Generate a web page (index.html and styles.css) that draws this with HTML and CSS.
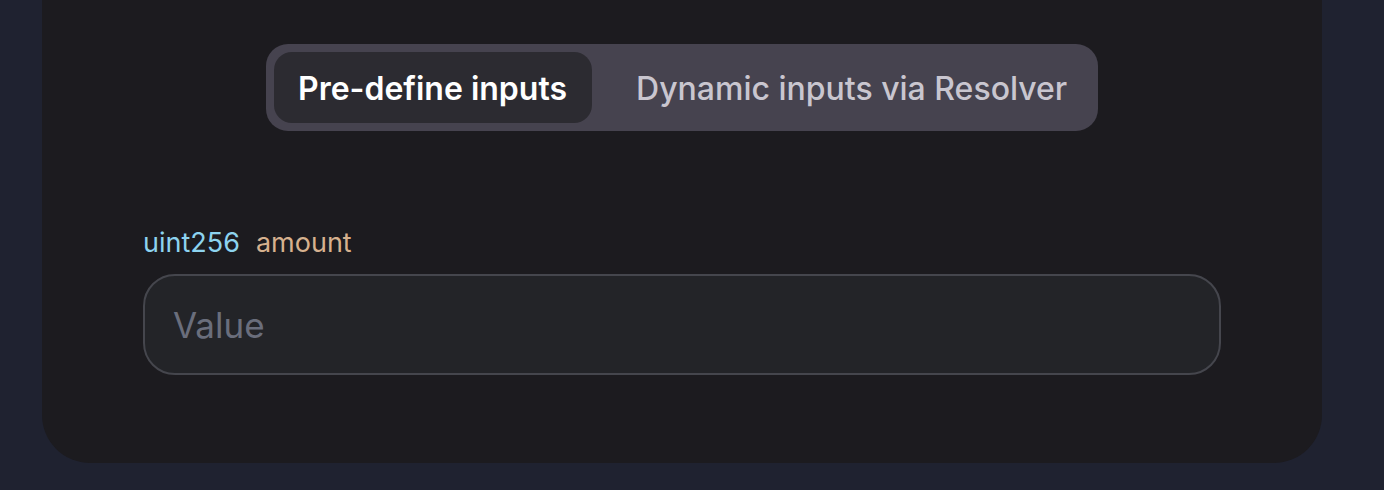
FILE: index.html
```html
<!DOCTYPE html>
<html>
<head>
<meta charset="utf-8">
<link rel="stylesheet" href="styles.css">
</head>
<body>
<div class="page">
  <div class="card">
    <div class="tabs-row">
      <div class="tabs">
        <div class="tab active">Pre-define inputs</div>
        <div class="tab">Dynamic inputs via Resolver</div>
      </div>
    </div>
    <div class="field">
      <div class="label"><span class="type">uint256</span><span class="name">amount</span></div>
      <div class="input"><span class="placeholder">Value</span></div>
    </div>
  </div>
</div>
</body>
</html>
```
FILE: styles.css
```css
html, body {
  margin: 0;
  padding: 0;
  background: #1f2230;
  font-family: Inter, "Noto Sans", sans-serif;
}
.page {
  width: 1384px;
  height: 490px;
  padding: 0 0 0 42px;
  box-sizing: border-box;
}
.card {
  width: 1280px;
  background: #1c1b1f;
  height: 463px;
  border-radius: 0 0 48px 48px;
  padding-top: 44px;
  box-sizing: border-box;
}
.tabs-row {
  display: flex;
  justify-content: center;
}
.tabs {
  display: flex;
  background: #46434f;
  border-radius: 22px;
  padding: 8px;
  width: 832px;
  box-sizing: border-box;
}
.tab {
  height: 71px;
  display: flex;
  align-items: center;
  padding: 2px 25px 0 44px;
  box-sizing: border-box;
  font-size: 32px;
  font-weight: 500;
  color: #c9c6cf;
  border-radius: 18px;
  white-space: nowrap;
}
.tab.active {
  background: #2c2b31;
  color: #ffffff;
  font-weight: 600;
  padding: 2px 25px 0 24px;
}
.field {
  padding: 95px 101px 0;
}
.label {
  font-size: 27px;
  line-height: 34px;
  display: flex;
  gap: 16px;
}
.type { color: #8dd3ef; }
.name { color: #d6b18e; }
.input {
  margin-top: 14px;
  height: 101px;
  box-sizing: border-box;
  border: 2px solid #45464d;
  border-radius: 32px;
  background: #232428;
  display: flex;
  align-items: center;
  padding: 0 28px;
}
.placeholder {
  font-size: 35px;
  color: #6a6e7c;
}
```
